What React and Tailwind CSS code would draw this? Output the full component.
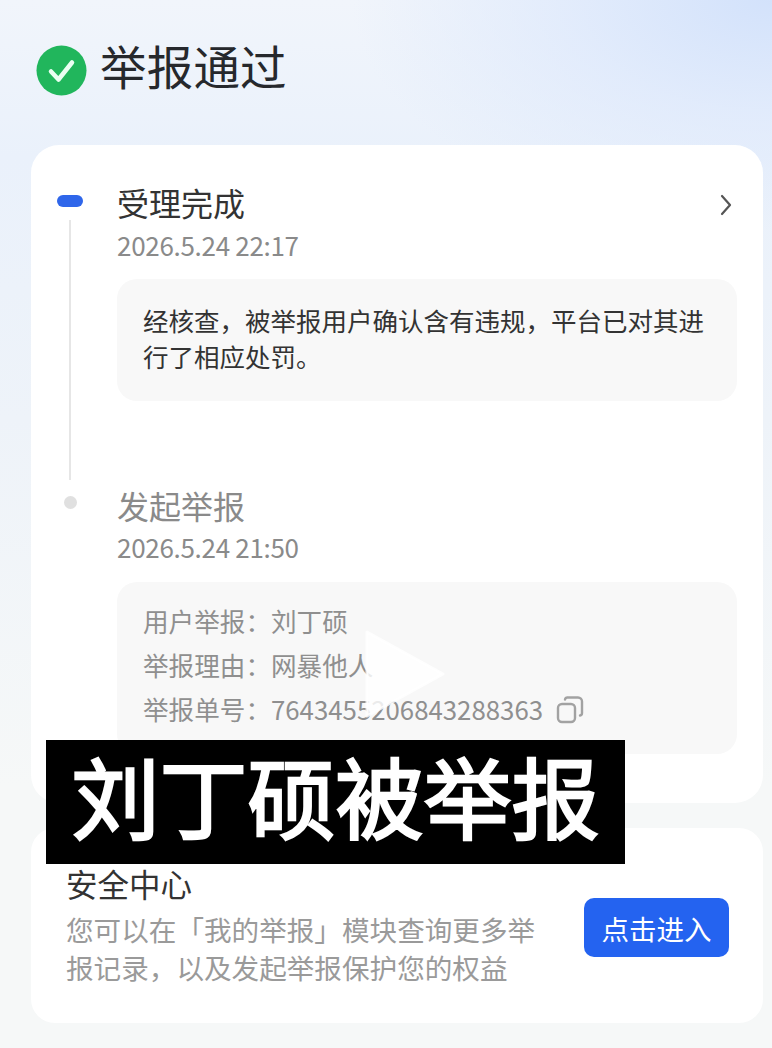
import React from "react";

const cjk = "font-['Noto_Sans_CJK_SC','Noto_Sans',sans-serif]";

const Check = () => (
  <svg width="51" height="51" viewBox="0 0 51 51" className="shrink-0">
    <circle cx="25.5" cy="25.5" r="25" fill="#21b65c" />
    <path d="M15 26.5 L22.5 34.5 L36 17.5" fill="none" stroke="#eafff2" strokeWidth="4.5" strokeLinecap="round" strokeLinejoin="round" />
  </svg>
);

const Chevron = () => (
  <svg width="14" height="22" viewBox="0 0 14 22" className="absolute right-[30px] top-[49px]">
    <path d="M3 2 L11 11 L3 20" fill="none" stroke="#555" strokeWidth="2.2" strokeLinecap="round" strokeLinejoin="round" />
  </svg>
);

const Copy = () => (
  <svg width="28" height="28" viewBox="0 0 28 28" className="ml-[13px] mt-[2px] shrink-0">
    <rect x="2" y="8" width="17" height="18" rx="4" fill="none" stroke="#a2a2a2" strokeWidth="2.4" />
    <path d="M9 3.5 a2.5 2.5 0 0 1 2.5 -2 H22 a4 4 0 0 1 4 4 V17 a2.5 2.5 0 0 1 -2 2.5" fill="none" stroke="#a2a2a2" strokeWidth="2.4" strokeLinecap="round" />
  </svg>
);

const Play = () => (
  <svg width="84" height="92" viewBox="0 0 84 92" className="absolute left-[363px] top-[628px]">
    <path d="M4 4 L80 46 L4 88 Z" fill="#ffffff" fillOpacity="0.82" stroke="#ffffff" strokeOpacity="0.82" strokeWidth="3" strokeLinejoin="round" />
  </svg>
);

export default function App() {
  return (
    <div className={`relative w-[772px] h-[1048px] overflow-hidden ${cjk} bg-[radial-gradient(ellipse_420px_230px_at_100%_0%,#d3e2fb_0%,rgba(222,233,252,0.75)_50%,rgba(240,245,252,0)_100%),linear-gradient(180deg,#f1f5fb_0%,#eaf1fb_15%,#eef3f9_40%,#f6f8f8_75%,#f6f8f8_100%)]`}>
      <div className="flex items-start gap-[13px] pl-[36px] pt-[45px] h-[145px]">
        <Check />
        <h1 className="-mt-[3px] text-[46.5px] leading-[46px] text-[#26282c] tracking-[0.2px]">举报通过</h1>
      </div>

      <div className="relative ml-[31px] mr-[9px] h-[658px] rounded-[28px] bg-white pt-[38px] pl-[26px]">
        <Chevron />
        <div className="flex">
          <div className="w-[26px] flex flex-col items-center shrink-0">
            <div className="mt-[12px] w-[26px] h-[12px] rounded-full bg-[#2f66ea]" />
            <div className="mt-[13px] w-[2px] h-[260px] bg-[#e6e6e6]" />
          </div>
          <div className="ml-[34px] w-[620px]">
            <div className="text-[32px] leading-[38px] text-[#333]">受理完成</div>
            <div className="mt-[9px] text-[26px] leading-[30px] text-[#8a8a8a] tracking-[-0.3px]">2026.5.24 22:17</div>
            <div className="mt-[19px] h-[122px] rounded-[20px] bg-[#f8f8f8] px-[26px] pt-[23px] text-[25.5px] leading-[36px] text-[#333]">
              经核查，被举报用户确认含有违规，平台已对其进行了相应处罚。
            </div>
          </div>
        </div>

        <div className="flex mt-[6px]">
          <div className="w-[26px] flex flex-col items-center shrink-0">
            <div className="mt-[10px] w-[13px] h-[13px] rounded-full bg-[#e0e0e0]" />
          </div>
          <div className="ml-[34px] w-[620px]">
            <div className="text-[32px] leading-[38px] text-[#8a8a8a]">发起举报</div>
            <div className="mt-[8px] text-[26px] leading-[30px] text-[#8a8a8a] tracking-[-0.3px]">2026.5.24 21:50</div>
            <div className="mt-[20px] h-[172px] rounded-[20px] bg-[#f8f8f8] pl-[26px] pt-[17px] text-[25.6px] leading-[44px] text-[#8f8f8f]">
              <div>用户举报：刘丁硕</div>
              <div>举报理由：网暴他人</div>
              <div className="flex items-center">
                <span>举报单号：</span>
                <span className="text-[25.8px]">7643455206843288363</span>
                <Copy />
              </div>
            </div>
          </div>
        </div>
      </div>

      <div className="ml-[31px] mr-[9px] mt-[25px] h-[195px] rounded-[24px] bg-white pl-[35px] pr-[34px] pt-[36px] flex justify-between items-start">
        <div className="w-[480px]">
          <div className="text-[31.5px] leading-[38px] text-[#333]">安全中心</div>
          <div className="mt-[8px] text-[27.6px] leading-[38px] text-[#9a9a9a]">
            您可以在「我的举报」模块查询更多举报记录，以及发起举报保护您的权益
          </div>
        </div>
        <button className="mt-[34px] w-[145px] h-[59px] rounded-[10px] bg-[#2463f0] text-white text-[27.5px] leading-[52px] text-center">
          点击进入
        </button>
      </div>

      <Play />

      <div className="absolute left-[46px] top-[740px] w-[579px] h-[124px] bg-black flex items-center justify-center text-white text-[88px] leading-[108px] pb-[16px] [-webkit-text-stroke:2.5px_white] whitespace-nowrap">
        刘丁硕被举报
      </div>
    </div>
  );
}
